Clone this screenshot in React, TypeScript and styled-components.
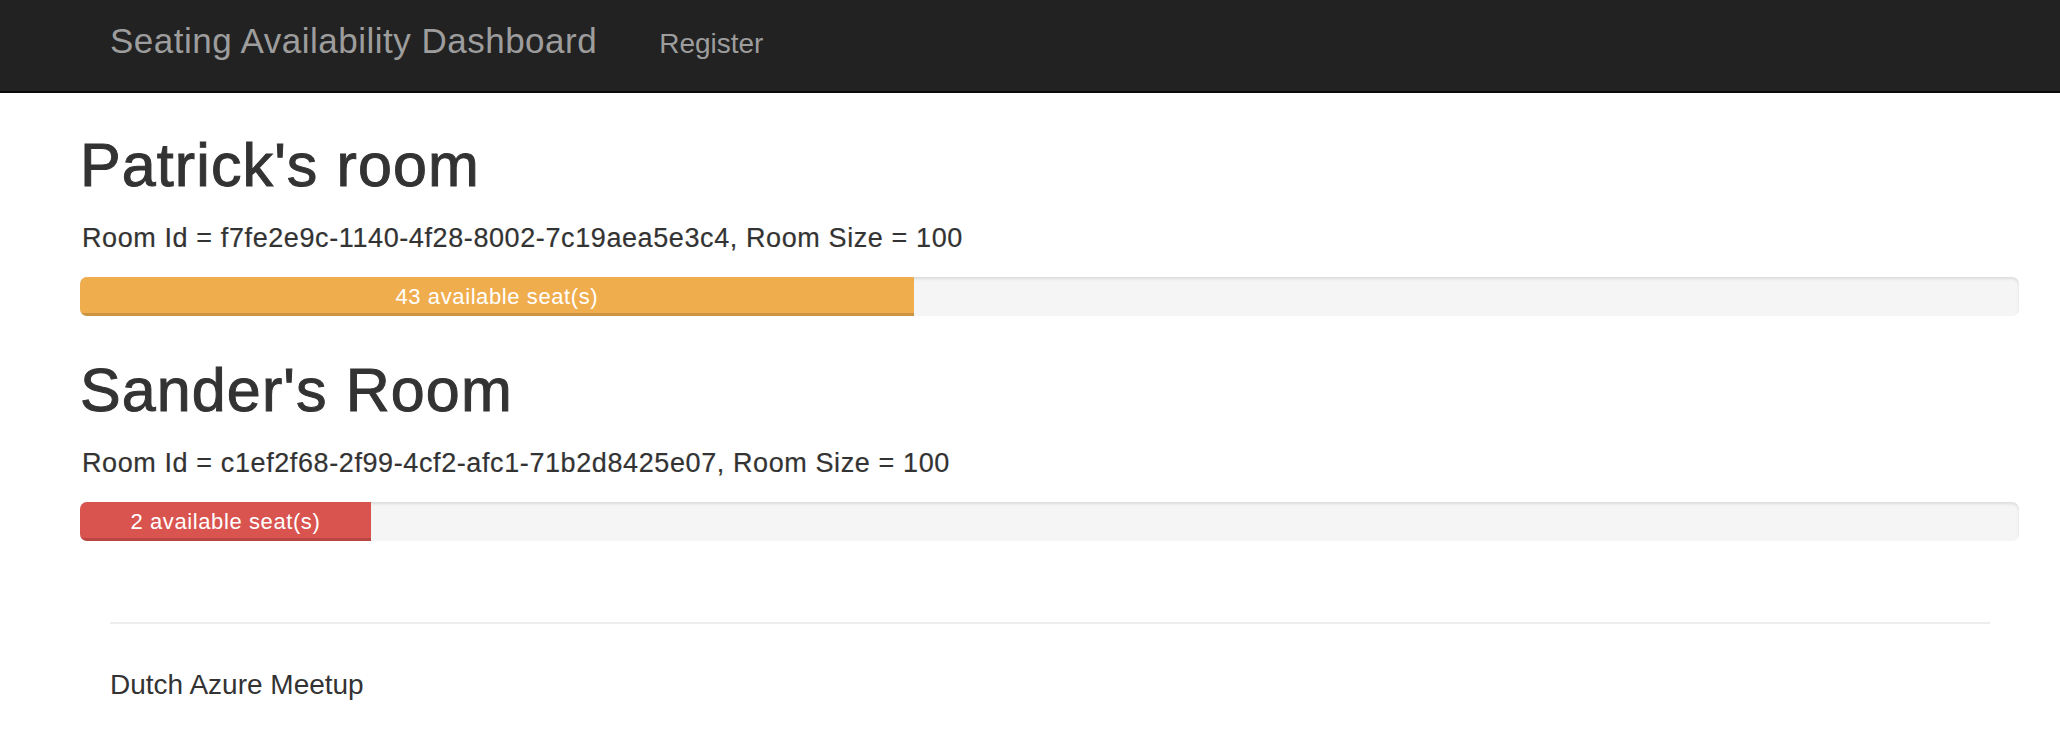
import styled, { createGlobalStyle } from "styled-components";

const GlobalStyle = createGlobalStyle`
  body {
    margin: 0;
    background: #fff;
    font-family: "Liberation Sans", Arial, sans-serif;
    color: #333;
  }
`

type Room = {
    name: string
    id: string
    size: number
    available: number
}

const rooms: Room[] = [
    { name: "Patrick's room", id: "f7fe2e9c-1140-4f28-8002-7c19aea5e3c4", size: 100, available: 43 },
    { name: "Sander's Room", id: "c1ef2f68-2f99-4cf2-afc1-71b2d8425e07", size: 100, available: 2 },
]

export default function App() {
    return (
        <>
            <GlobalStyle/>
            <Navbar>
                <NavInner>
                    <Brand>Seating Availability Dashboard</Brand>
                    <NavLink>Register</NavLink>
                </NavInner>
            </Navbar>
            <Main>
                {rooms.map((room, i) => {
                    const pct = (room.available / room.size) * 100
                    return (
                        <section key={room.id}>
                            <RoomTitle first={i === 0}>{room.name}</RoomTitle>
                            <Info>Room Id = {room.id}, Room Size = {room.size}</Info>
                            <Progress>
                                <Bar low={pct < 20} style={{ width: `${Math.max(pct, 15)}%` }}>
                                    {room.available} available seat(s)
                                </Bar>
                            </Progress>
                        </section>
                    )
                })}
            </Main>
            <Footer>
                <Rule/>
                <FooterText>Dutch Azure Meetup</FooterText>
            </Footer>
        </>
    )
}

const Navbar = styled.nav`
  height: 91px;
  background-color: #222;
  border-bottom: 2px solid #080808;
`

const NavInner = styled.div`
  display: flex;
  align-items: baseline;
  gap: 62px;
  padding: 21px 0 0 110px;
`

const Brand = styled.a`
  font-size: 35px;
  line-height: 40px;
  letter-spacing: 0.5px;
  color: #9d9d9d;
`

const NavLink = styled.a`
  font-size: 28px;
  line-height: 40px;
  color: #9d9d9d;
`

const Main = styled.main`
  padding: 0 41px 0 80px;
`

type TitleProps = {
    first?: boolean
}
const RoomTitle = styled.h1<TitleProps>`
  margin: ${props => props.first ? '39px' : '41px'} 0 0;
  font-size: 61px;
  line-height: 67px;
  font-weight: 500;
  letter-spacing: 1.1px;
  color: #333;
  -webkit-text-stroke: 1px #333;
`

const Info = styled.p`
  margin: 20px 0 0 2px;
  font-size: 27px;
  line-height: 38px;
  letter-spacing: 0.6px;
  -webkit-text-stroke: 0.2px #333;
`

const Progress = styled.div`
  height: 39px;
  margin-top: 20px;
  overflow: hidden;
  background-color: #f5f5f5;
  border-radius: 7px;
  box-shadow: inset 0 2px 3px rgba(0, 0, 0, .1);
`

type BarProps = {
    low?: boolean
}
const Bar = styled.div<BarProps>`
  height: 100%;
  font-size: 22px;
  line-height: 39px;
  letter-spacing: 0.6px;
  color: #fff;
  text-align: center;
  background-color: ${props => props.low ? '#d9534f' : '#f0ad4e'};
  box-shadow: inset 0 -3px 0 rgba(0, 0, 0, .15);
`

const Footer = styled.footer`
  padding: 81px 70px 0 110px;
`

const Rule = styled.hr`
  margin: 0;
  border: 0;
  border-top: 2px solid #eee;
`

const FooterText = styled.p`
  margin: 42px 0 0;
  font-size: 28px;
  line-height: 38px;
`
